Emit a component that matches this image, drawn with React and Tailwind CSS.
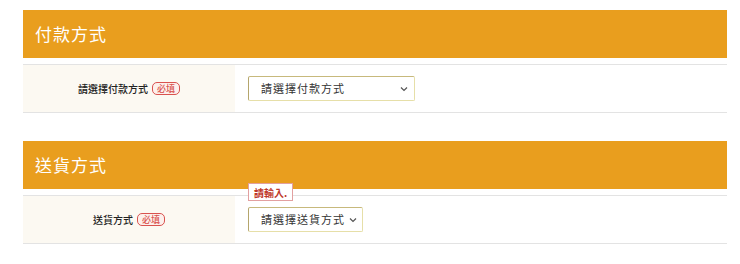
import React from 'react';

// Required badge
const Required = () => (
  <span className="ml-1 inline-flex items-center h-[13px] px-[4px] rounded-[5px] border border-[#d9534f] text-[#d9534f] text-[9px] leading-none bg-[#fdf0ec]">
    必填
  </span>
);

// Select box
const SelectBox = ({ text, width, tooltip }) => (
  <div className="relative">
    {tooltip && (
      <div className="absolute left-0 -top-[24px] h-[18px] px-[5px] flex items-center border border-[#e2a0a0] bg-white text-[#c0392b] text-[10px] font-bold whitespace-nowrap">
        {tooltip}
      </div>
    )}
    <div
      className={`${width} h-[25px] flex items-center justify-between pl-[12px] pr-[6px] bg-white border border-[#e6dfa8] border-l-[#b5a66c] border-t-[#c7b97c] rounded-[2px] text-[11px] text-[#333] whitespace-nowrap`}
    >
      <span className="tracking-[1px]">{text}</span>
      <svg width="8" height="6" viewBox="0 0 8 6" className="ml-[4px] shrink-0">
        <path d="M1 1.5 L4 4.5 L7 1.5" fill="none" stroke="#555" strokeWidth="1.2" />
      </svg>
    </div>
  </div>
);

// Section
const Section = ({ title, label, select }) => (
  <div>
    <div className="h-[48px] bg-[#e99e1e] flex items-center pl-[12px] text-white text-[17px] tracking-[1px]">
      {title}
    </div>
    <div className="mt-[6px] h-[49px] flex border-t border-b border-[#e3e3e3]">
      <div className="w-[212px] bg-[#fcf9f2] flex items-center justify-center text-[10px] font-medium text-[#222]">
        {label}
        <Required />
      </div>
      <div className="flex-1 flex items-center pl-[13px]">{select}</div>
    </div>
  </div>
);

export default function App() {
  return (
    <div
      className="w-[740px] h-[264px] bg-white pt-[10px] pl-[23px] pr-[13px]"
      style={{ fontFamily: '"Noto Sans CJK TC", "Noto Sans", sans-serif' }}
    >
      <Section
        title="付款方式"
        label="請選擇付款方式"
        select={<SelectBox text="請選擇付款方式" width="w-[167px]" />}
      />
      <div className="h-[28px]" />
      <Section
        title="送貨方式"
        label="送貨方式"
        select={<SelectBox text="請選擇送貨方式" width="w-[115px]" tooltip="請輸入." />}
      />
    </div>
  );
}
